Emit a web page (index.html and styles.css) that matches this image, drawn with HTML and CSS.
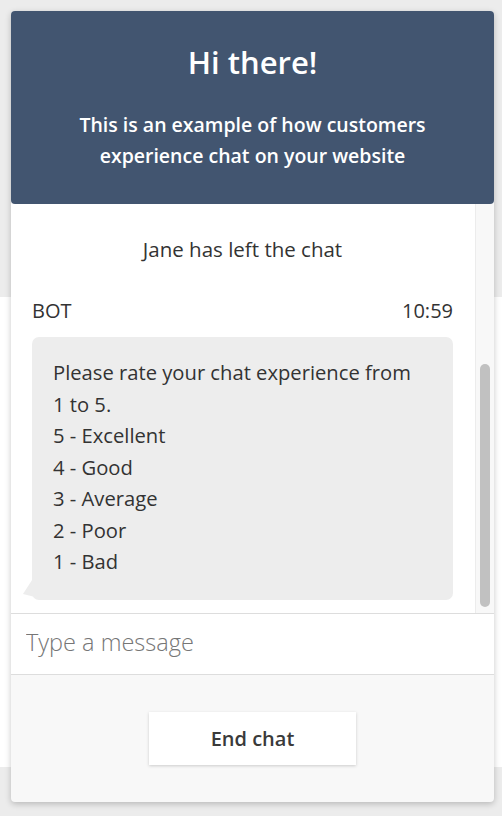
FILE: index.html
```html
<!DOCTYPE html>
<html>
<head>
    <meta charset="utf-8" />
    <title>Chat preview</title>
    <link rel="stylesheet" href="styles.css">
</head>
<body>
    <div class="backdrop">
        <div class="band"></div>
    </div>
    <div class="widget">
        <header class="widget-header">
            <h1>Hi there!</h1>
            <p>This is an example of how customers experience chat on your website</p>
        </header>
        <div class="transcript">
            <div class="messages">
                <p class="event">Jane has left the chat</p>
                <div class="message">
                    <div class="meta">
                        <span>BOT</span>
                        <span>10:59</span>
                    </div>
                    <div class="bubble">
                        <p>Please rate your chat experience from 1 to 5.</p>
                        <p>5 - Excellent</p>
                        <p>4 - Good</p>
                        <p>3 - Average</p>
                        <p>2 - Poor</p>
                        <p>1 - Bad</p>
                    </div>
                </div>
            </div>
            <div class="scrollbar">
                <div class="thumb"></div>
            </div>
        </div>
        <div class="composer">
            <input type="text" placeholder="Type a message">
        </div>
        <footer class="widget-footer">
            <button class="end-chat">End chat</button>
        </footer>
    </div>
</body>
</html>
```

FILE: styles.css
```css
html, body {
    margin: 0;
    height: 100%;
    font-family: "Open Sans", "Noto Sans", sans-serif;
    color: #333;
}

body {
    background: #ececec;
    overflow: hidden;
}

.backdrop {
    position: absolute;
    inset: 0;
    z-index: 0;
}

.band {
    margin-top: 297px;
    height: 470px;
    background: #fff;
}

.widget {
    position: relative;
    z-index: 1;
    margin: 11px 0 0 11px;
    width: 483px;
    height: 791px;
    display: flex;
    flex-direction: column;
    background: #f8f8f8;
    border-radius: 4px;
    box-shadow: 0 2px 6px rgba(0, 0, 0, 0.22);
}

.widget-header {
    height: 193px;
    box-sizing: border-box;
    padding-top: 29px;
    background: #425570;
    border-radius: 4px;
    color: #fff;
    text-align: center;
}

.widget-header h1 {
    margin: 0;
    font-size: 31px;
    font-weight: 600;
    line-height: 44px;
}

.widget-header p {
    margin: 25px auto 0;
    width: 380px;
    font-size: 19.5px;
    font-weight: 600;
    line-height: 31px;
}

.transcript {
    height: 409px;
    display: flex;
    background: #fff;
    border-bottom: 1px solid #ddd;
}

.messages {
    flex: 1;
    padding: 0 22px 0 21px;
}

.event {
    margin: 31px 0 0;
    text-align: center;
    font-size: 20.5px;
    line-height: 28px;
}

.message {
    margin-top: 34px;
}

.meta {
    display: flex;
    justify-content: space-between;
    font-size: 20px;
    line-height: 28px;
}

.bubble {
    position: relative;
    margin-top: 12px;
    padding: 20px 21px 22px;
    background: #ededed;
    border-radius: 7px;
}

.bubble:before {
    content: '';
    position: absolute;
    left: -9px;
    bottom: 3px;
    width: 10px;
    height: 18px;
    background: #ededed;
    clip-path: polygon(100% 0, 0 86%, 100% 100%);
}

.bubble p {
    margin: 0;
    max-width: 368px;
    font-size: 20.2px;
    line-height: 31.5px;
}

.scrollbar {
    width: 19px;
    background: #f8f8f8;
    border-left: 1px solid #ececec;
    padding: 160px 4px 6px;
    box-sizing: border-box;
    display: flex;
    flex-direction: column;
}

.thumb {
    flex: 1;
    background: #c1c1c1;
    border-radius: 5px;
}

.composer {
    height: 60px;
    background: #fff;
    border-bottom: 1px solid #ddd;
}

.composer input {
    width: 100%;
    height: 100%;
    box-sizing: border-box;
    border: none;
    outline: none;
    padding: 0 15px 4px;
    font-family: inherit;
    font-size: 23.5px;
    font-weight: 300;
    color: #333;
    background: transparent;
}

.composer input::placeholder {
    color: #767676;
}

.widget-footer {
    flex: 1;
    display: flex;
    justify-content: center;
    padding-top: 37px;
}

.end-chat {
    width: 207px;
    height: 53px;
    border: none;
    background: #fff;
    box-shadow: 0 1px 3px rgba(0, 0, 0, 0.18);
    font-family: inherit;
    font-size: 20px;
    font-weight: 600;
    color: #3a3a3a;
}
```
